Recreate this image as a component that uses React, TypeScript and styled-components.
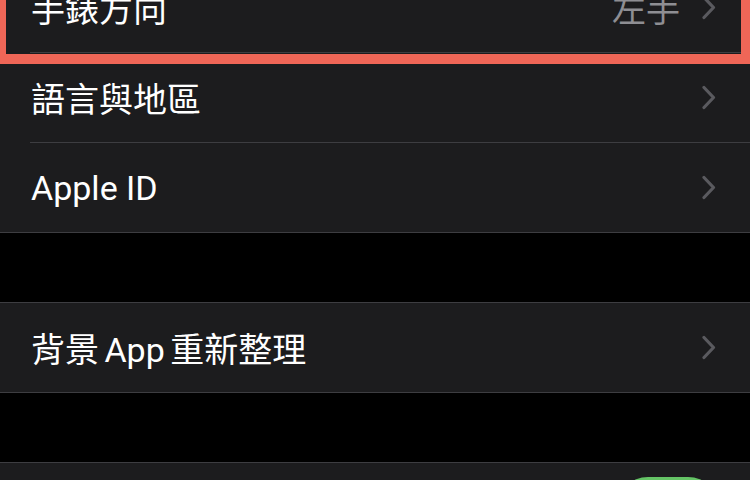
import React from "react";
import styled, { createGlobalStyle } from "styled-components";

const Global = createGlobalStyle`
  html, body { margin: 0; padding: 0; background: #000; }
  body {
    width: 750px;
    height: 480px;
    overflow: hidden;
    font-family: Roboto, "Noto Sans CJK TC", sans-serif;
    -webkit-font-smoothing: antialiased;
  }
`;

const Screen = styled.div`
  display: flex;
  flex-direction: column;
  gap: 69px;
  margin-top: -38px;
`;

const Group = styled.section`
  display: flex;
  flex-direction: column;
  background: #1c1c1e;
  border-top: 1px solid #3d3d41;
  border-bottom: 1px solid #3d3d41;
`;

const Inner = styled.div`
  display: flex;
  align-items: center;
  height: 89px;
  padding-right: 34px;
`;

const Row = styled.div`
  position: relative;
  padding-left: 30px;
  &:not(:last-child) ${Inner} {
    border-bottom: 1px solid #3d3d41;
  }
`;

const Label = styled.span<{ $mixed?: boolean }>`
  flex: 1;
  padding-left: 1px;
  color: #ffffff;
  font-size: 34px;
  word-spacing: ${(p) => (p.$mixed ? "-3px" : "0")};
  white-space: nowrap;
`;

const Value = styled.span`
  color: #8e8e93;
  font-size: 34px;
  margin-right: 22px;
`;

const Highlight = styled.div`
  position: absolute;
  left: 0;
  right: 0;
  top: -10px;
  bottom: -11px;
  border-style: solid;
  border-color: #ef6657;
  border-width: 6px 9px 10px 6px;
  pointer-events: none;
  z-index: 1;
`;

const Track = styled.div<{ $on: boolean }>`
  position: relative;
  width: 102px;
  height: 62px;
  margin-right: -3px;
  border-radius: 31px;
  background: ${(p) => (p.$on ? "#65c466" : "#39393d")};
`;

const Knob = styled.div<{ $on: boolean }>`
  position: absolute;
  top: 4px;
  left: ${(p) => (p.$on ? "44px" : "4px")};
  width: 54px;
  height: 54px;
  border-radius: 50%;
  background: #fff;
`;

const Chevron = () => (
  <svg width="14" height="25" viewBox="0 0 14 25" fill="none">
    <polyline
      points="2,2.5 11.5,12.5 2,22.5"
      stroke="#5a5a5f"
      strokeWidth="3.2"
      strokeLinecap="round"
      strokeLinejoin="round"
    />
  </svg>
);

type Item = {
  label: string;
  value?: string;
  highlight?: boolean;
  toggle?: boolean;
  mixed?: boolean;
};

const groups: Item[][] = [
  [
    { label: "手錶方向", value: "左手", highlight: true },
    { label: "語言與地區" },
    { label: "Apple ID" },
  ],
  [{ label: "背景 App 重新整理", mixed: true }],
  [{ label: "", toggle: true }],
];

export default function App() {
  return (
    <>
      <Global />
      <Screen>
        {groups.map((g, gi) => (
          <Group key={gi}>
            {g.map((it, i) => (
              <Row key={i}>
                <Inner>
                  <Label $mixed={it.mixed}>{it.label}</Label>
                  {it.value && <Value>{it.value}</Value>}
                  {it.toggle ? (
                    <Track $on>
                      <Knob $on />
                    </Track>
                  ) : (
                    <Chevron />
                  )}
                </Inner>
                {it.highlight && <Highlight />}
              </Row>
            ))}
          </Group>
        ))}
      </Screen>
    </>
  );
}
